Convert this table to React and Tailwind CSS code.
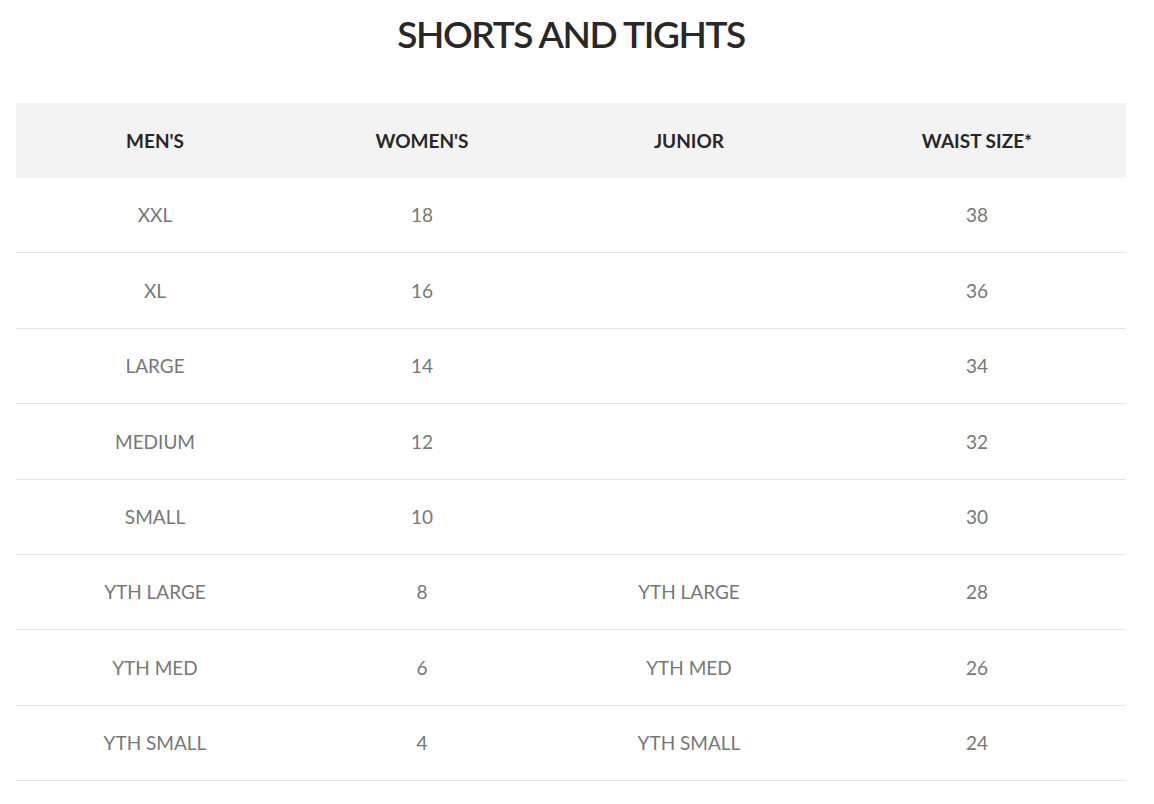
const rows = [
  ["XXL", "18", "", "38"],
  ["XL", "16", "", "36"],
  ["LARGE", "14", "", "34"],
  ["MEDIUM", "12", "", "32"],
  ["SMALL", "10", "", "30"],
  ["YTH LARGE", "8", "YTH LARGE", "28"],
  ["YTH MED", "6", "YTH MED", "26"],
  ["YTH SMALL", "4", "YTH SMALL", "24"],
];

const headers = ["MEN'S", "WOMEN'S", "JUNIOR", "WAIST SIZE*"];

export default function App() {
  return (
    <div className="min-h-screen bg-white px-4" style={{ fontFamily: "Lato, 'Open Sans', sans-serif" }}>
      <div className="w-[1110px]">
        <h1 className="pt-[12px] text-center text-[37px] font-semibold leading-[44px] tracking-[-1.4px] text-[#2a2727]">
          SHORTS AND TIGHTS
        </h1>
        <div className="mt-[47px]">
          <div className="grid h-[75px] grid-cols-[278px_256px_278px_298px] items-center bg-[#f3f3f3] text-[19px] font-bold text-[#2a2727]">
            {headers.map((h) => (
              <div key={h} className="pt-px text-center">{h}</div>
            ))}
          </div>
          {rows.map((r, i) => (
            <div
              key={i}
              className="grid h-[75.4px] grid-cols-[278px_256px_278px_298px] items-center border-b border-[#e4e4e4] text-[19px] text-[#777777]"
            >
              {r.map((c, j) => (
                <div key={j} className="pt-px text-center">{c}</div>
              ))}
            </div>
          ))}
        </div>
      </div>
    </div>
  );
}
